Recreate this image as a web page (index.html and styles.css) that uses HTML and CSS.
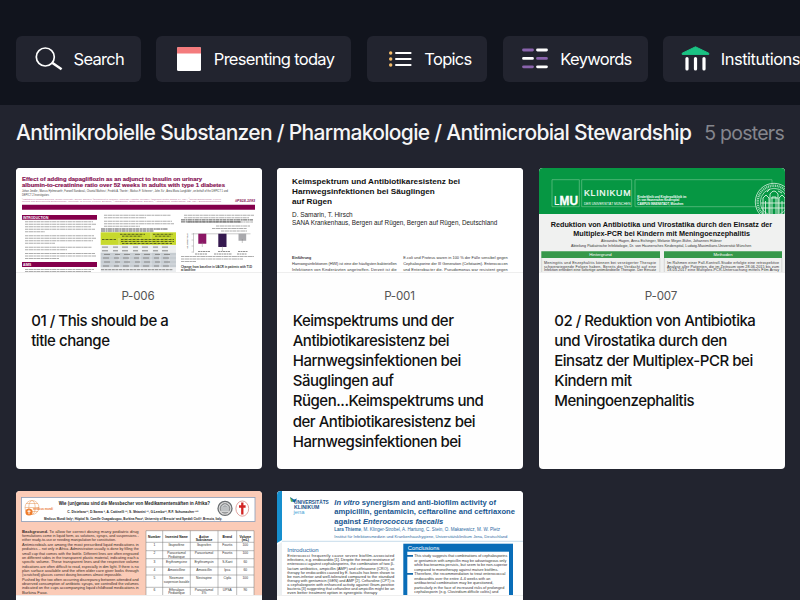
FILE: index.html
```html
<!DOCTYPE html>
<html lang="de">
<head>
<meta charset="utf-8">
<title>Posters</title>
<link rel="stylesheet" href="styles.css">
</head>
<body>
<nav class="toolbar">
  <button class="tool tool-search">
    <svg class="icon" width="28" height="26" viewBox="0 0 28 26"><circle cx="10.3" cy="11" r="9" fill="none" stroke="#fff" stroke-width="1.7"/><path d="M16.800 16.500L26.600 23.300" stroke="#fff" stroke-width="2.500"/></svg>
    <span>Search</span>
  </button>
  <button class="tool tool-today">
    <svg class="icon" width="24" height="24" viewBox="0 0 24 24"><rect width="24" height="24" rx="1.500" fill="#fff"/><path d="M0 6.500V1.500A1.500 1.500 0 0 1 1.500 0h21A1.500 1.500 0 0 1 24 1.500v5z" fill="#f47b7d"/></svg>
    <span>Presenting today</span>
  </button>
  <button class="tool tool-topics">
    <svg class="icon" width="23" height="16" viewBox="0 0 23 16"><g fill="#f6bd6a"><circle cx="1.700" cy="2" r="1.700"/><circle cx="1.700" cy="8" r="1.700"/><circle cx="1.700" cy="14" r="1.700"/></g><path d="M7 2h14.600M7 8h14.600M7 14h14.600" stroke="#fff" stroke-width="2" stroke-linecap="round"/></svg>
    <span>Topics</span>
  </button>
  <button class="tool tool-keywords">
    <svg class="icon" width="26" height="21" viewBox="0 0 26 21"><g stroke-width="2.800" stroke-linecap="round"><path d="M1.500 2h9M15.500 10.400h9M1.500 18.800h9" stroke="#8a64ad"/><path d="M15.500 2h9M1.500 10.400h9M15.500 18.800h9" stroke="#fff"/></g></svg>
    <span>Keywords</span>
  </button>
  <button class="tool tool-institutions">
    <svg class="icon" width="29" height="25" viewBox="0 0 29 25"><path d="M14.500.8L27.800 7.200V8.400H1.200V7.200z" fill="#1bc283" stroke="#1bc283" stroke-linejoin="round"/><path d="M6 12.500v10.500M14.500 12.500v10.500M23 12.500v10.500" stroke="#fff" stroke-width="3.200" stroke-linecap="round"/></svg>
    <span>Institutions</span>
  </button>
</nav>

<main class="section">
  <header class="section-head">
    <h1>Antimikrobielle Substanzen / Pharmakologie / Antimicrobial Stewardship</h1>
    <span class="count">5 posters</span>
  </header>

  <div class="grid">
    <article class="card">
      <svg class="thumb" viewBox="0 0 246 104" font-family="Liberation Sans, sans-serif">
        <rect width="246" height="104" fill="#fff"/>
        <g fill="#861052" font-weight="bold" font-size="6" stroke="#861052" stroke-width=".15">
          <text x="6" y="12.700" textLength="180" lengthAdjust="spacingAndGlyphs">Effect of adding dapagliflozin as an adjunct to insulin on urinary</text>
          <text x="6" y="19.400" textLength="203" lengthAdjust="spacingAndGlyphs">albumin-to-creatinine ratio over 52 weeks in adults with type 1 diabetes</text>
        </g>
        <g fill="#444" font-size="3">
          <text x="6" y="24.300" textLength="206" lengthAdjust="spacingAndGlyphs">Johan Jendle¹, Marcus Hjelmesæth², Fanwell Sandoval³, Chantal Mathieu⁴, Fredrik A. Thorén⁵, Markus F. Scheerer⁵, John Xu⁵, Anna Maria Langkilde⁵, on behalf of the DEPICT 1 and</text>
          <text x="6" y="27.600" textLength="27" lengthAdjust="spacingAndGlyphs">DEPICT 2 Investigators</text>
        </g>
        <g fill="#b66a94" font-size="2.300">
          <text x="6" y="31.500" textLength="199" lengthAdjust="spacingAndGlyphs">¹Institution of Medical Sciences, Örebro University, Örebro, Sweden; ²Department of Medicine, University Hospital, Germany; ³Research Center, Dallas, TX, USA; ⁴Clinical Endocrinology, Leuven</text>
          <text x="6" y="34.200" textLength="199" lengthAdjust="spacingAndGlyphs">Clinical and Experimental Endocrinology, University of Leuven, Leuven, Belgium; ⁵AstraZeneca, Gothenburg, Sweden; ⁶AstraZeneca, Gaithersburg, MD, USA; BioPharmaceuticals</text>
        </g>
        <text x="219" y="34" font-size="3.600" font-weight="bold" font-style="italic" fill="#861052" textLength="20" lengthAdjust="spacingAndGlyphs">#PS18-1093</text>
        <path d="M6 36.700h233v5H6zM6 47h75v4.800H6zM6 94h75v5H6z" fill="#84004c"/>
        <g fill="#fff" font-weight="bold" font-size="3.300"><text x="7" y="50.600">INTRODUCTION</text><text x="7" y="97.800">AIMS</text></g>
        <g stroke="#777" stroke-width="1.100" stroke-dasharray="3 .5 5 .4 2 .4 4 .5" opacity=".6">
          <path d="M9 53.800h68M9 56.300h71M9 58.800h66M9 61.300h70M9 63.800h20M9 67.800h69M9 70.300h71M9 72.800h68M9 75.300h30M9 79.300h67M9 81.800h42M9 85.500h70M9 88h71M9 90.500h34M9 101.500h69M9 103.500h66"/>
          <path d="M88 47.300h67M88 49.800h42M88 53.300h68M88 55.800h70M88 58.300h36"/>
          <path d="M168 47.300h70M168 49.800h65M171 54h66M200 58h34M196 60.500h35M205 63h26"/>
          <path d="M165 88.500h73M165 91h62M165 93.500h15"/>
        </g>
        <g stroke="#333" stroke-width="1" stroke-dasharray="4 .5 2 .4" opacity=".8"><path d="M85 61h67M85 63h53M165 51.900h72M165 53.900h60"/></g>
        <rect x="84.700" y="64.300" width="75.300" height="12.800" fill="#c7d92d"/>
        <rect x="84.700" y="77" width="75.300" height="27" fill="#eceef0"/>
        <path d="M84.700 84.500h75.300v15H84.700z" fill="#c6ccd1"/>
        <path d="M84.700 77.200h75.300M84.700 81h75.300M84.700 84.500h75.300M84.700 88h75.300M84.700 92h75.300M84.700 96h75.300M84.700 99.600h75.300M103 70v34M113 70v34M124 70v34M135 65v39M144 70v34M153 70v34" stroke="#fff" stroke-width=".35"/>
        <g stroke="#3d461a" stroke-width=".8" stroke-dasharray="2 .5 1 .5"><path d="M104 66.300h25M137 66.300h20M106 68.200h20M139 68.200h16M86 71.500h14M105 71.500h53M105 73.500h53M106 75.500h50"/></g>
        <g stroke="#888" stroke-width="1" stroke-dasharray="6 5 5 4"><path d="M86 79.100h70M86 82.800h70M88 86.400h70M87 90h70M88 94h70M87 98h70"/><path d="M85 101.700h72" stroke-dasharray="3 .6"/></g>
        <path d="M177.500 65v19.500M177.500 65.800h57M175.500 66h2M175.500 72h2M175.500 78h2M175.500 84h2" stroke="#999" stroke-width=".5" fill="none"/>
        <path d="M182.300 65.800h8v10h-8z" fill="#8b1765"/><path d="M202.300 65.800h8.200v13.200h-8.200z" fill="#35194f"/><path d="M222.500 65.800h7.700v6.900h-7.700z" fill="#a9a9ad"/>
        <path d="M186.300 74v5M206.400 78v5M226.300 71v4" stroke="#777" stroke-width=".4"/>
        <text transform="translate(171.500 81) rotate(-90)" font-size="2.400" fill="#333">Adjusted mean</text>
        <path d="M182 83.500h12M202 83.500h12M222 83.500h10M179 86h12M198 86h18M221 86h10" stroke="#777" stroke-width=".8" stroke-dasharray="2 .5"/>
        <g font-size="2.800" font-weight="bold" fill="#333"><text x="165" y="100" textLength="71" lengthAdjust="spacingAndGlyphs">Change from baseline in UACR in patients with T1D</text><text x="165" y="103.300">at baseline</text></g>
      </svg>
      <div class="body"><p class="code">P-006</p><h2>01 / This should be a<br>title change</h2></div>
    </article>

    <article class="card">
      <svg class="thumb" viewBox="0 0 246 104" font-family="Liberation Sans, sans-serif">
        <rect width="246" height="104" fill="#fff"/>
        <g font-size="7.700" font-weight="bold" fill="#111">
          <text x="15" y="16.200" textLength="168" lengthAdjust="spacingAndGlyphs">Keimspektrum und Antibiotikaresistenz bei</text>
          <text x="15" y="26.200" textLength="142.700" lengthAdjust="spacingAndGlyphs">Harnwegsinfektionen bei Säuglingen</text>
          <text x="15" y="36.200" textLength="40" lengthAdjust="spacingAndGlyphs">auf Rügen</text>
        </g>
        <g font-size="6.600" fill="#222">
          <text x="15" y="49.200" textLength="60.700" lengthAdjust="spacingAndGlyphs">D. Samarin, T. Hirsch</text>
          <text x="15" y="57" textLength="205.300" lengthAdjust="spacingAndGlyphs">SANA Krankenhaus, Bergen auf Rügen, Bergen auf Rügen, Deutschland</text>
        </g>
        <g font-size="3.900" fill="#333">
          <text x="15" y="91.200" font-weight="bold" textLength="19.300" lengthAdjust="spacingAndGlyphs">Einführung</text>
          <text x="15" y="97.200" textLength="104.700">Harnwegsinfektionen (HWI) ist eine der häufigsten bakteriellen</text>
          <text x="15" y="103.100" textLength="104.700">Infektionen von Kinderärzten angetroffen. Derzeit ist die</text>
          <text x="126.300" y="91.200" textLength="104.400">E.coli und Proteus waren in 100 % der Fälle sensibel gegen</text>
          <text x="126.300" y="97.200" textLength="104.400">Cephalosporine der III Generation (Cefotaxim). Enterococcen</text>
          <text x="126.300" y="103.100" textLength="104.400">und Enterobacter die. Pseudomonas war resistent gegen</text>
        </g>
      </svg>
      <div class="body"><p class="code">P-001</p><h2>Keimspektrums und der<br>Antibiotikaresistenz bei<br>Harnwegsinfektionen bei<br>Säuglingen auf<br>Rügen...Keimspektrums und<br>der Antibiotikaresistenz bei<br>Harnwegsinfektionen bei</h2></div>
    </article>

    <article class="card">
      <svg class="thumb" viewBox="0 0 246 104" font-family="Liberation Sans, sans-serif">
        <rect width="246" height="104" fill="#f0f1f0"/>
        <rect width="246" height="46" fill="#069743"/>
        <path d="M13 11.700h27.300v27H13zM42.700 11.700h50v27h-50zM218 38.700H96v-27h137v5" fill="none" stroke="#79c995" stroke-width=".6"/>
        <g fill="#fff">
          <text x="15" y="37.200" font-size="12" textLength="5.500" lengthAdjust="spacingAndGlyphs">L</text>
          <text x="20.500" y="37.200" font-size="12" font-weight="bold" textLength="18.500" lengthAdjust="spacingAndGlyphs" stroke="#fff" stroke-width=".3">MU</text>
          <text x="45" y="27.600" font-size="8.800" textLength="46.500" stroke="#fff" stroke-width=".2">KLINIKUM</text>
          <text x="45" y="37" font-size="3.200" textLength="46.500" lengthAdjust="spacingAndGlyphs">DER UNIVERSITÄT MÜNCHEN</text>
          <g font-size="3.200" font-weight="bold"><text x="98.300" y="29.700" textLength="49" lengthAdjust="spacingAndGlyphs">Kinderklinik und Kinderpoliklinik im</text><text x="98.300" y="33.300" textLength="42" lengthAdjust="spacingAndGlyphs">Dr. von Haunerschen Kinderspital</text><text x="98.300" y="37" textLength="46" lengthAdjust="spacingAndGlyphs">CAMPUS INNENSTADT, München</text></g>
        </g>
        <svg x="214" y="12" width="32" height="34" viewBox="214 12 32 34">
          <g fill="none" stroke="#d9f0e0"><circle cx="235" cy="34" r="18.700" stroke-width=".8"/><circle cx="235" cy="34" r="16.300" stroke-width="2.400" stroke-dasharray="1 .8" opacity=".75"/><circle cx="235" cy="34" r="13.700" stroke-width=".7"/>
          <path d="M224 46V30l3-3 3 3v16M231 46V26q4-6 8 0v20M240 46V30l3-3 3 3v16M222 40h25M222 35h25M233 46V29h4v17M226.500 46V33M243 46V33M232 30h7M228 24l3-3M239 23l4 2" stroke-width=".9"/></g>
        </svg>
        <g font-size="7.800" font-weight="bold" fill="#111"><text x="11.700" y="58.900" textLength="221.500" lengthAdjust="spacingAndGlyphs">Reduktion von Antibiotika und Virostatika durch den Einsatz der</text><text x="34.300" y="67.500" textLength="176.700" lengthAdjust="spacingAndGlyphs">Multiplex-PCR bei Kindern mit Meningoenzephalitis</text></g>
        <g font-size="4" fill="#333"><text x="62" y="74.300" textLength="120.700" lengthAdjust="spacingAndGlyphs">Alexandra Hagen, Anna Eichinger, Melanie Meyer-Bühn, Johannes Hübner</text><text x="32" y="78.800" textLength="180.300" lengthAdjust="spacingAndGlyphs">Abteilung Pädiatrische Infektiologie, Dr. von Haunersches Kinderspital, Ludwig-Maximilians-Universität München</text></g>
        <path d="M2.300 83.300H121v6.700H2.300zM125 83.300h118V90H125z" fill="#36984a"/>
        <path d="M2.700 90v14M120.800 90v14M125.300 90v14M242.800 90v14" stroke="#bbb" stroke-width=".5"/>
        <g font-size="4.300" fill="#fff" text-anchor="middle"><text x="61.500" y="88.200">Hintergrund</text><text x="184" y="88.200">Methoden</text></g>
        <g font-size="3.700" fill="#333">
          <text x="5" y="95.700" textLength="112">Meningitis und Enzephalitis können bei verzögerter Therapie</text><text x="5" y="99.600" textLength="112">schwerwiegende Folgen haben. Bereits der Verdacht auf eine</text><text x="5" y="103.400" textLength="112" lengthAdjust="spacingAndGlyphs">Infektion erfordert eine sofortige antimikrobielle Therapie. Der Einsatz</text>
          <text x="128" y="95.700" textLength="112">Im Rahmen einer Fall-Kontroll-Studie erfolgte eine retrospektive</text><text x="128" y="99.600" textLength="112">Analyse aller Patienten, die im Zeitraum vom 28.06.2015 bis zum</text><text x="128" y="103.400" textLength="112">18.03.2017 eine Multiplex-PCR-Untersuchung mittels Film Array</text>
        </g>
      </svg>
      <div class="body"><p class="code">P-007</p><h2>02 / Reduktion von Antibiotika<br>und Virostatika durch den<br>Einsatz der Multiplex-PCR bei<br>Kindern mit<br>Meningoenzephalitis</h2></div>
    </article>

    <article class="card">
      <svg class="thumb" viewBox="0 0 246 104" font-family="Liberation Sans, sans-serif">
        <rect width="246" height="104" fill="#fbcbb7"/>
        <rect x="5.500" y="6.500" width="233.500" height="24" fill="#fff" stroke="#8a9db8" stroke-width=".8"/>
        <g font-weight="bold" fill="#222">
          <text x="42.700" y="14.200" font-size="5.200" textLength="151.300" lengthAdjust="spacingAndGlyphs">Wie (un)genau sind die Messbecher von Medikamentensäften in Afrika?</text>
          <text x="51.300" y="21.900" font-size="3.800" textLength="131" lengthAdjust="spacingAndGlyphs">C. Distefano¹², D.Sanna ², A. Cattinelli ¹², S. Shtanini ¹³, G.Lembo¹², R.F. Schumacher ¹²³</text>
          <text x="28" y="28.900" font-size="3.400" textLength="178" lengthAdjust="spacingAndGlyphs">Medicus Mundi Italy¹, Hôpital St. Camille Ouagadougou, Burkina Faso², University of Brescia³ and Spedali Civili³, Brescia, Italy.</text>
        </g>
        <g fill="none" stroke="#e9a36c" stroke-width=".6"><ellipse cx="16" cy="16.500" rx="7" ry="7"/><ellipse cx="16" cy="16.500" rx="3.200" ry="7"/><path d="M9 16.500h14M10 12.500h12M10 20.500h12"/></g>
        <circle cx="13" cy="21" r="3.600" fill="#ef7d2d"/><path d="M13 18.800v4.400M11.400 20.300h3.200" stroke="#fff" stroke-width=".9"/>
        <text x="17" y="18.700" font-size="4" font-weight="bold" fill="#ea742d" textLength="20" lengthAdjust="spacingAndGlyphs">medicus mundi</text>
        <circle cx="209" cy="17.400" r="7" fill="#ddd" stroke="#6b6f72" stroke-width="1.300"/><circle cx="209" cy="17.400" r="4.800" fill="#a9adb0" stroke="#555" stroke-width=".5"/><path d="M206 20.500v-5l3-2 3 2v5M208 20v-4M210 20v-4M205 20.500h8" stroke="#eee" stroke-width=".6" fill="none"/>
        <ellipse cx="226.300" cy="17.600" rx="6.400" ry="7.600" fill="#fff" stroke="#d98b86" stroke-width=".8"/><path d="M226.300 11.500v12M223 15.500h6.600" stroke="#d22323" stroke-width="2.300"/>
        <g font-size="4.200" fill="#3a2d28">
          <text x="6" y="41.600" textLength="116.700"><tspan font-weight="bold">Background.</tspan> To allow for correct dosing many pediatric drug</text>
          <text x="6" y="46" textLength="116.700" lengthAdjust="spacingAndGlyphs">formulations come in liquid form, as solutions, syrups, and suspensions -</text>
          <text x="6" y="50.400" textLength="94" lengthAdjust="spacingAndGlyphs">either ready-to-use or needing manipulation for constitution.</text>
          <text x="6" y="54.700" textLength="116.700" lengthAdjust="spacingAndGlyphs">Antimicrobials are among the most prescribed liquid medications in</text>
          <text x="6" y="59.100" textLength="116.700" lengthAdjust="spacingAndGlyphs">pediatrics – not only in Africa. Administration usually is done by filling the</text>
          <text x="6" y="63.500" textLength="116.700" lengthAdjust="spacingAndGlyphs">small cup that comes with the bottle. Different lines are often engraved</text>
          <text x="6" y="67.800" textLength="116.700" lengthAdjust="spacingAndGlyphs">on different sides in the transparent plastic material, indicating each a</text>
          <text x="6" y="72.200" textLength="116.700" lengthAdjust="spacingAndGlyphs">specific volume. These transparent lines and the respective volume</text>
          <text x="6" y="76.500" textLength="116.700" lengthAdjust="spacingAndGlyphs">indications are often difficult to read, especially in dim light. If there is no</text>
          <text x="6" y="80.900" textLength="116.700" lengthAdjust="spacingAndGlyphs">plan surface available and the often older care giver looks through</text>
          <text x="6" y="85.300" textLength="100" lengthAdjust="spacingAndGlyphs">(scratched) glasses correct dosing becomes almost impossible.</text>
          <text x="6" y="89.600" textLength="116.700" lengthAdjust="spacingAndGlyphs">Pushed by the too often occurring discrepancy between attended and</text>
          <text x="6" y="94" textLength="116.700" lengthAdjust="spacingAndGlyphs">observed consumption of antibiotic syrups, we controlled the volumes</text>
          <text x="6" y="98.400" textLength="116.700" lengthAdjust="spacingAndGlyphs">indicated on the cups accompanying liquid childhood medications in</text>
          <text x="6" y="102.700">Burkina Faso.</text>
        </g>
        <rect x="130" y="39.700" width="108" height="64.300" fill="#fff"/>
        <path d="M130 39.700h108M130 51.300h108M130 59.700h108M130 67.700h108M130 76h108M130 84h108M130 96.300h108M130 39.700V104M146.700 39.700V104M174.300 39.700V104M202 39.700V104M220.700 39.700V104M238 39.700V104" stroke="#777" stroke-width=".5"/>
        <g font-size="3.300" fill="#333" text-anchor="middle">
          <g font-weight="bold" fill="#111"><text x="138.300" y="46.500" textLength="12.500" lengthAdjust="spacingAndGlyphs">Number</text><text x="160.500" y="46.500" textLength="22.500" lengthAdjust="spacingAndGlyphs">Invented Name</text><text x="188" y="46.500">Active</text><text x="188" y="50.400">Substance</text><text x="211.300" y="46.500">Brand</text><text x="229.300" y="46.500">Volume</text><text x="229.300" y="50.400">(mL)</text></g>
          <text x="138.300" y="55">1</text><text x="160.500" y="55">Ibuprofène</text><text x="188" y="55">Ibuprofen</text><text x="211.300" y="55">Fourtis</text><text x="229.300" y="55">100</text>
          <text x="138.300" y="63">2</text><text x="160.500" y="63">Paracetamol</text><text x="160.500" y="66.900">Pediatrique</text><text x="188" y="63">Paracetamol</text><text x="211.300" y="63">Fourtis</text><text x="229.300" y="63">100</text>
          <text x="138.300" y="71.500">3</text><text x="160.500" y="71.500">Erythromycine</text><text x="188" y="71.500">Erythromycin</text><text x="211.300" y="71.500">S-Kant</text><text x="229.300" y="71.500">60</text>
          <text x="138.300" y="79.800">4</text><text x="160.500" y="79.800">Amoxicilline</text><text x="188" y="79.800">Amoxicillin</text><text x="211.300" y="79.800">Ipca</text><text x="229.300" y="79.800">60</text>
          <text x="138.300" y="88">5</text><text x="160.500" y="88">Neomune</text><text x="160.500" y="92" textLength="25.500" lengthAdjust="spacingAndGlyphs">suspension buvable</text><text x="188" y="88">Nevirapine</text><text x="211.300" y="88">Cipla</text><text x="229.300" y="88">100</text>
          <text x="138.300" y="99.600">6</text><text x="160.500" y="99.600">Efferalgan</text><text x="160.500" y="103.400">Pediatrique</text><text x="188" y="99.600">Paracetamol</text><text x="188" y="103.400">3%</text><text x="211.300" y="99.600">UPSA</text><text x="229.300" y="99.600">90</text>
        </g>
      </svg>
      <div class="body"></div>
    </article>

    <article class="card">
      <svg class="thumb" viewBox="0 0 246 104" font-family="Liberation Sans, sans-serif">
        <rect width="246" height="104" fill="#fff"/>
        <path d="M0 0h5v49l-5 3z" fill="#178fce"/>
        <path d="M0 54l5-3v53H0z" fill="#eceff1"/>
        <path d="M5 50.300h241" stroke="#b9d3e6" stroke-width=".8"/>
        <path d="M13 6l4 2.500 3-1-2 4-3-1z" fill="#166ba8"/><path d="M13 6l3 4-2 1z" fill="#63b246"/>
        <g font-weight="bold" fill="#184f87" font-size="4.700"><text x="17" y="13.400" textLength="34.700" lengthAdjust="spacingAndGlyphs">UNIVERSITÄTS</text><text x="17" y="18.200" textLength="25.300" lengthAdjust="spacingAndGlyphs">KLINIKUM</text></g>
        <text x="16.500" y="22.500" font-size="4.800" fill="#4ba5d6" textLength="11" lengthAdjust="spacingAndGlyphs">jena</text>
        <g font-weight="bold" font-size="7.700" fill="#17568f">
          <text x="57.300" y="14" textLength="161.700" lengthAdjust="spacingAndGlyphs"><tspan font-style="italic">In vitro</tspan> synergism and anti-biofilm activity of</text>
          <text x="57.300" y="23.200" textLength="180.700" lengthAdjust="spacingAndGlyphs">ampicillin, gentamicin, ceftaroline and ceftriaxone</text>
          <text x="57.300" y="32.500" textLength="109" lengthAdjust="spacingAndGlyphs">against <tspan font-style="italic">Enterococcus faecalis</tspan></text>
        </g>
        <g fill="#2d6b9f" font-size="4.800"><text x="57.300" y="39.500" textLength="165.700" lengthAdjust="spacingAndGlyphs"><tspan font-weight="bold">Lara Thieme</tspan>, M. Klinger-Strobel, A. Hartung, C. Stein, O. Makarewicz, M. W. Pletz</text><text x="57.300" y="46.700" font-size="4.200" textLength="173" lengthAdjust="spacingAndGlyphs">Institut für Infektionsmedizin und Krankenhaushygiene, Universitätsklinikum Jena, Deutschland</text></g>
        <text x="10.300" y="60.800" font-size="5.700" fill="#1d659f" textLength="31.400" lengthAdjust="spacingAndGlyphs">Introduction</text>
        <g font-size="4" fill="#333">
          <text x="10.300" y="66" textLength="107">Enterococci frequently cause severe biofilm-associated</text>
          <text x="10.300" y="70.200" textLength="107">infections, e.g. endocarditis [1]. Despite the innate resistance of</text>
          <text x="10.300" y="74.400" textLength="107" lengthAdjust="spacingAndGlyphs">enterococci against cephalosporins, the combination of two β-</text>
          <text x="10.300" y="78.600" textLength="107" lengthAdjust="spacingAndGlyphs">lactam antibiotics, ampicillin (AMP) and ceftriaxone (CRO), as</text>
          <text x="10.300" y="82.700" textLength="107" lengthAdjust="spacingAndGlyphs">therapy for endocarditis caused by E. faecalis has been shown to</text>
          <text x="10.300" y="86.900" textLength="107" lengthAdjust="spacingAndGlyphs">be non-inferior and well-tolerated compared to the standard</text>
          <text x="10.300" y="91.100" textLength="107" lengthAdjust="spacingAndGlyphs">therapy with gentamicin (GEN) and AMP [2]. Ceftaroline (CPT) is</text>
          <text x="10.300" y="95.200" textLength="107" lengthAdjust="spacingAndGlyphs">a cephalosporin with enhanced activity against Gram-positive</text>
          <text x="10.300" y="99.300" textLength="107" lengthAdjust="spacingAndGlyphs">bacteria [3] suggesting that ceftaroline and ampicillin might be an</text>
          <text x="10.300" y="103.200" textLength="90" lengthAdjust="spacingAndGlyphs">even better treatment option in synergistic therapy</text>
        </g>
        <rect x="126.300" y="52.700" width="109.700" height="51.300" fill="#096db8"/><rect x="130.300" y="60.700" width="101.700" height="43.300" fill="#fff"/>
        <text x="130.800" y="59.300" font-size="5.700" fill="#fff" textLength="31.500" lengthAdjust="spacingAndGlyphs">Conclusions</text>
        <path d="M130 64h6v1.800h-6zM130 82h6v1.800h-6z" fill="#1768a8"/>
        <g font-size="4.100" fill="#333">
          <text x="137.300" y="66.200" textLength="93" lengthAdjust="spacingAndGlyphs">This study suggests that combinations of cephalosporins</text>
          <text x="137.300" y="70.700" textLength="92" lengthAdjust="spacingAndGlyphs">or gentamicin with ampicillin may be advantageous only</text>
          <text x="137.300" y="75.200" textLength="93" lengthAdjust="spacingAndGlyphs">while bacteraemia persists, but seem to be non-superior</text>
          <text x="137.300" y="79.700" textLength="84" lengthAdjust="spacingAndGlyphs">compared to monotherapy against mature biofilms.</text>
          <text x="137.300" y="84.200" textLength="91" lengthAdjust="spacingAndGlyphs">Therefore, the recommendation to treat enterococcal</text>
          <text x="137.300" y="88.700" textLength="76" lengthAdjust="spacingAndGlyphs">endocarditis over the entire 4–6 weeks with an</text>
          <text x="137.300" y="93.200" textLength="79" lengthAdjust="spacingAndGlyphs">antibacterial combination may be questioned,</text>
          <text x="137.300" y="97.700" textLength="90" lengthAdjust="spacingAndGlyphs">particularly in the face of increased risks of prolonged</text>
          <text x="137.300" y="102.200" textLength="84" lengthAdjust="spacingAndGlyphs">cephalosporin (e.g. Clostridium difficile colitis) and</text>
        </g>
      </svg>
      <div class="body"></div>
    </article>
  </div>
</main>
</body>
</html>
```
FILE: styles.css
```css
* {
  box-sizing: border-box;
}

body {
  margin: 0;
  width: 800px;
  height: 600px;
  overflow: hidden;
  background: #11141d;
  font-family: Inter, "Liberation Sans", sans-serif;
  color: #fff;
}

.toolbar {
  display: flex;
  gap: 15.5px;
  height: 105px;
  padding: 35.5px 0 0 16px;
}

.tool {
  display: flex;
  flex: none;
  align-items: center;
  height: 46px;
  padding: 0;
  border: 0;
  border-radius: 6px;
  background: #22242f;
  color: #fff;
  font: 400 16.5px/20px Inter, "Liberation Sans", sans-serif;
  letter-spacing: -0.7px;
  white-space: nowrap;
}

.tool .icon {
  flex: none;
}

.tool-search {
  width: 124.8px;
  padding-left: 19px;
  gap: 10.5px;
}

.tool-today {
  width: 195px;
  padding-left: 20.5px;
  gap: 13px;
}

.tool-topics {
  width: 120.5px;
  padding-left: 22px;
  gap: 12.5px;
}

.tool-keywords {
  width: 145px;
  padding-left: 19px;
  gap: 12.5px;
}

.tool-institutions {
  width: 156px;
  padding-left: 18px;
  gap: 10.5px;
  letter-spacing: -0.5px;
}

.section {
  height: 495px;
  padding: 14px 16px 0;
  overflow: hidden;
  background: #22242f;
}

.section-head {
  display: flex;
  align-items: baseline;
  justify-content: space-between;
  height: 48.5px;
  line-height: 28px;
  white-space: nowrap;
}

h1 {
  margin: 0;
  font-size: 21px;
  font-weight: 500;
  letter-spacing: -0.69px;
  color: #f5f5f6;
}

.count {
  font-size: 19.5px;
  letter-spacing: -0.75px;
  color: #85868d;
}

.grid {
  display: grid;
  grid-template-columns: repeat(3, 246px);
  grid-auto-rows: 301px;
  gap: 22px 15.5px;
  margin-left: -0.3px;
}

.card {
  overflow: hidden;
  border-radius: 4px;
  background: #fefefe;
  color: #111;
}

.thumb {
  display: block;
  width: 246px;
  height: 104px;
}

.body {
  padding: 15.5px 0 0 15.5px;
  border-top: 1px solid #eee;
}

.code {
  margin: 0 17px 6.5px 0;
  font-size: 11.6px;
  line-height: 16px;
  letter-spacing: -0.2px;
  text-align: center;
  color: #555;
}

h2 {
  margin: 0;
  font-size: 15px;
  font-weight: 500;
  line-height: 20.2px;
  letter-spacing: -0.47px;
  white-space: nowrap;
}
```
